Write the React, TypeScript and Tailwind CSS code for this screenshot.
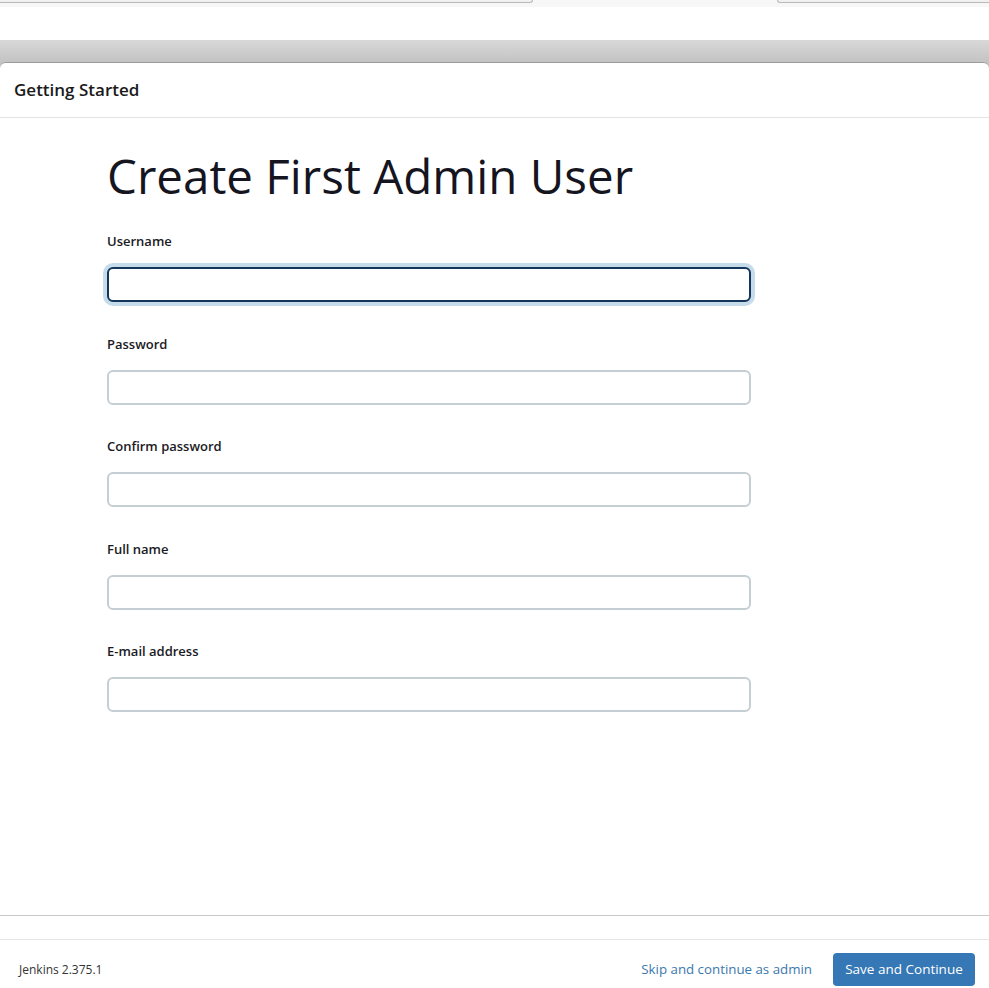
import React from "react"

const font = { fontFamily: '"Open Sans", "Noto Sans", sans-serif' }

const fields = [
  { label: "Username", focused: true },
  { label: "Password" },
  { label: "Confirm password" },
  { label: "Full name" },
  { label: "E-mail address" },
]

const Field = ({ label, focused }: { label: string; focused?: boolean }) => (
  <div className="flex flex-col">
    <label className="text-[13px] font-semibold leading-[18px] text-[#1a1a24]">{label}</label>
    <input
      type="text"
      className={
        focused
          ? "mt-[17px] h-[35px] w-[644px] rounded-[6px] border-2 border-[#14365a] bg-white outline-none ring-[4px] ring-[#c7dceb]"
          : "mt-[17px] h-[35px] w-[644px] rounded-[6px] border-2 border-[#c5ced3] bg-white outline-none"
      }
    />
  </div>
)

export default function App() {
  return (
    <div className="flex h-[988px] w-[989px] flex-col overflow-hidden bg-white" style={font}>
      {/* browser tab strip remnants */}
      <div className="flex h-[7px] bg-[#f7f7f7]">
        <div className="h-[3px] w-[533px] rounded-br-[6px] border-b border-r border-[#b9b9b9] bg-[#f0f0f0]" />
        <div className="w-[244px]" />
        <div className="h-[3px] flex-1 rounded-bl-[6px] border-b border-l border-[#b9b9b9] bg-[#f0f0f0]" />
      </div>
      <div className="h-[33px] bg-white" />
      <div className="flex flex-1 flex-col bg-[linear-gradient(to_bottom,#d8d8d8_0px,#c3c3c3_22px)] pt-[22px]">
        <div className="flex flex-1 flex-col rounded-t-[6px] border-t border-[#9a9a9a] bg-white">
          <div className="flex h-[55px] items-center border-b border-[#e3e3e3] px-[14px]">
            <h4 className="text-[17px] font-semibold text-[#1a1a1a]">Getting Started</h4>
          </div>
          <div className="flex flex-1 flex-col border-b border-[#c9c9c9] pl-[107px] pt-[26px]">
            <h1 className="text-[47.5px] leading-[64px] font-normal text-[#15151f]">
              Create First Admin User
            </h1>
            <div className="mt-[24px] flex flex-col gap-[32.5px]">
              {fields.map((f) => (
                <Field key={f.label} label={f.label} focused={f.focused} />
              ))}
            </div>
          </div>
          <div className="h-[24px] border-b border-[#e6e6e6]" />
          <div className="flex h-[48px] items-start justify-between pl-[19px] pr-[14px] pt-[13px]">
            <span className="flex h-[33px] items-center text-[12px] text-[#333]">Jenkins 2.375.1</span>
            <div className="flex items-center gap-[21px]">
              <a className="text-[13.3px] text-[#3a79ad]">Skip and continue as admin</a>
              <button className="h-[33px] w-[142px] rounded-[4px] bg-[#3677b5] text-[13.5px] text-white">
                Save and Continue
              </button>
            </div>
          </div>
        </div>
      </div>
    </div>
  )
}
